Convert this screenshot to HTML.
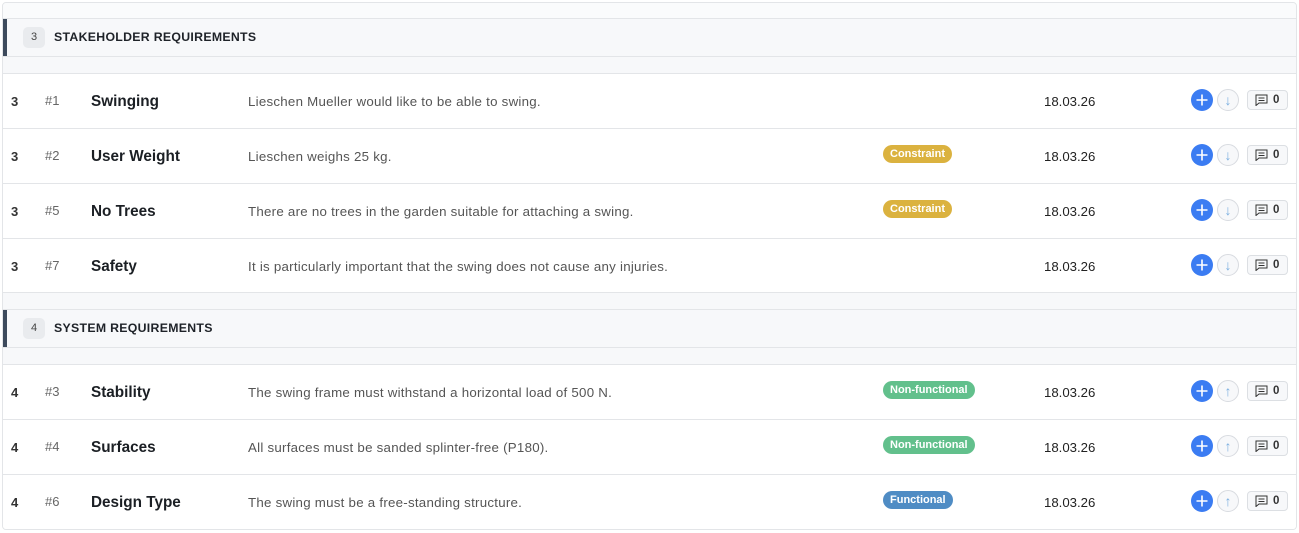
<!DOCTYPE html><html><head><style>
body{margin:0;width:1299px;height:533px;background:#fff;font-family:"Liberation Sans",sans-serif;position:relative;overflow:hidden}
.wrap{position:absolute;left:2px;top:2px;width:1295px;height:528px;border:1px solid #e3e5e8;border-radius:4px;background:#f7f8fa;box-sizing:border-box;overflow:hidden}
.abs{position:absolute}
.hdr{position:absolute;left:0;width:1293px;height:39px;background:#f7f8fa;border-top:1px solid #e3e5e8;border-bottom:1px solid #e3e5e8;box-sizing:border-box}
.hdr .bar{position:absolute;left:0;top:0;width:4px;height:100%;background:#3d4a5c}
.hdr .num{position:absolute;left:20px;top:8px;width:22px;height:21px;border-radius:5px;background:#e9ebee;font-size:11px;color:#444;text-align:center;line-height:21px}
.hdr .t{position:absolute;left:51px;top:11px;font-size:12.3px;font-weight:bold;letter-spacing:.3px;color:#1e2228}
.row{position:absolute;left:0;width:1293px;height:55px;background:#fff;border-top:1px solid #e3e5e8;box-sizing:border-box;font-size:13px;color:#333}
.row span{position:absolute}
.n{left:8px;top:20px;font-weight:bold;color:#333}
.id{left:42px;top:19px;color:#666}
.ti{left:88px;top:19px;font-size:15.3px;font-weight:bold;color:#1b1f24}
.d{left:245px;top:20px;color:#555;font-size:13.3px;letter-spacing:.25px}
.b{left:880px;top:16px;height:18px;line-height:18px;border-radius:9px;color:#fff;font-size:11px;font-weight:bold;padding:0 7px;display:block}
.dt{left:1041px;top:20px;color:#222;font-size:13.2px}
.pl{left:1188px;top:15px;width:22px;height:22px;border-radius:50%;background:#3b7cf2}
.ar{left:1214px;top:15px;width:20px;height:20px;border-radius:50%;border:1px solid #d8dbe0;background:#f7f8fa;color:#7aaee0;text-align:center;line-height:20px;font-size:14px}
.cm{left:1244px;top:16px;width:39px;height:18px;border:1px solid #dcdfe3;border-radius:4px;background:#f7f8fa;font-size:11.5px;font-weight:bold;color:#333}
.cm b{position:absolute;left:25px;top:0;line-height:19px}
</style></head><body><div class="wrap">
<div class="abs" style="left:0;top:0;width:1293px;height:15px;background:#fafbfc"></div>
<div class="hdr" style="top:15px"><div class="bar"></div><div class="num">3</div><div class="t">STAKEHOLDER REQUIREMENTS</div></div>
<div class="row" style="top:70px"><span class="n">3</span><span class="id">#1</span><span class="ti">Swinging</span><span class="d">Lieschen Mueller would like to be able to swing.</span><span class="dt">18.03.26</span><span class="pl"><svg width="22" height="22"><path d="M11 5.5v11M5.5 11h11" stroke="#fff" stroke-width="1.6"/></svg></span><span class="ar">↓</span><span class="cm"><svg style="position:absolute;left:7px;top:3px" width="13" height="12" viewBox="0 0 13 12"><path d="M1 1h11v8H4l-3 2.5z M3.5 4h6 M3.5 6.5h6" fill="none" stroke="#333" stroke-width="1"/></svg><b>0</b></span></div>
<div class="row" style="top:125px"><span class="n">3</span><span class="id">#2</span><span class="ti">User Weight</span><span class="d">Lieschen weighs 25 kg.</span><span class="b" style="background:#dbb23f">Constraint</span><span class="dt">18.03.26</span><span class="pl"><svg width="22" height="22"><path d="M11 5.5v11M5.5 11h11" stroke="#fff" stroke-width="1.6"/></svg></span><span class="ar">↓</span><span class="cm"><svg style="position:absolute;left:7px;top:3px" width="13" height="12" viewBox="0 0 13 12"><path d="M1 1h11v8H4l-3 2.5z M3.5 4h6 M3.5 6.5h6" fill="none" stroke="#333" stroke-width="1"/></svg><b>0</b></span></div>
<div class="row" style="top:180px"><span class="n">3</span><span class="id">#5</span><span class="ti">No Trees</span><span class="d">There are no trees in the garden suitable for attaching a swing.</span><span class="b" style="background:#dbb23f">Constraint</span><span class="dt">18.03.26</span><span class="pl"><svg width="22" height="22"><path d="M11 5.5v11M5.5 11h11" stroke="#fff" stroke-width="1.6"/></svg></span><span class="ar">↓</span><span class="cm"><svg style="position:absolute;left:7px;top:3px" width="13" height="12" viewBox="0 0 13 12"><path d="M1 1h11v8H4l-3 2.5z M3.5 4h6 M3.5 6.5h6" fill="none" stroke="#333" stroke-width="1"/></svg><b>0</b></span></div>
<div class="row" style="top:235px;border-bottom:1px solid #e3e5e8"><span class="n">3</span><span class="id">#7</span><span class="ti">Safety</span><span class="d">It is particularly important that the swing does not cause any injuries.</span><span class="dt">18.03.26</span><span class="pl"><svg width="22" height="22"><path d="M11 5.5v11M5.5 11h11" stroke="#fff" stroke-width="1.6"/></svg></span><span class="ar">↓</span><span class="cm"><svg style="position:absolute;left:7px;top:3px" width="13" height="12" viewBox="0 0 13 12"><path d="M1 1h11v8H4l-3 2.5z M3.5 4h6 M3.5 6.5h6" fill="none" stroke="#333" stroke-width="1"/></svg><b>0</b></span></div>
<div class="hdr" style="top:306px"><div class="bar"></div><div class="num">4</div><div class="t">SYSTEM REQUIREMENTS</div></div>
<div class="row" style="top:361px"><span class="n">4</span><span class="id">#3</span><span class="ti">Stability</span><span class="d">The swing frame must withstand a horizontal load of 500 N.</span><span class="b" style="background:#62c08c">Non-functional</span><span class="dt">18.03.26</span><span class="pl"><svg width="22" height="22"><path d="M11 5.5v11M5.5 11h11" stroke="#fff" stroke-width="1.6"/></svg></span><span class="ar">↑</span><span class="cm"><svg style="position:absolute;left:7px;top:3px" width="13" height="12" viewBox="0 0 13 12"><path d="M1 1h11v8H4l-3 2.5z M3.5 4h6 M3.5 6.5h6" fill="none" stroke="#333" stroke-width="1"/></svg><b>0</b></span></div>
<div class="row" style="top:416px"><span class="n">4</span><span class="id">#4</span><span class="ti">Surfaces</span><span class="d">All surfaces must be sanded splinter-free (P180).</span><span class="b" style="background:#62c08c">Non-functional</span><span class="dt">18.03.26</span><span class="pl"><svg width="22" height="22"><path d="M11 5.5v11M5.5 11h11" stroke="#fff" stroke-width="1.6"/></svg></span><span class="ar">↑</span><span class="cm"><svg style="position:absolute;left:7px;top:3px" width="13" height="12" viewBox="0 0 13 12"><path d="M1 1h11v8H4l-3 2.5z M3.5 4h6 M3.5 6.5h6" fill="none" stroke="#333" stroke-width="1"/></svg><b>0</b></span></div>
<div class="row" style="top:471px;height:56px"><span class="n">4</span><span class="id">#6</span><span class="ti">Design Type</span><span class="d">The swing must be a free-standing structure.</span><span class="b" style="background:#4f8cc4">Functional</span><span class="dt">18.03.26</span><span class="pl"><svg width="22" height="22"><path d="M11 5.5v11M5.5 11h11" stroke="#fff" stroke-width="1.6"/></svg></span><span class="ar">↑</span><span class="cm"><svg style="position:absolute;left:7px;top:3px" width="13" height="12" viewBox="0 0 13 12"><path d="M1 1h11v8H4l-3 2.5z M3.5 4h6 M3.5 6.5h6" fill="none" stroke="#333" stroke-width="1"/></svg><b>0</b></span></div>
</div></body></html>
